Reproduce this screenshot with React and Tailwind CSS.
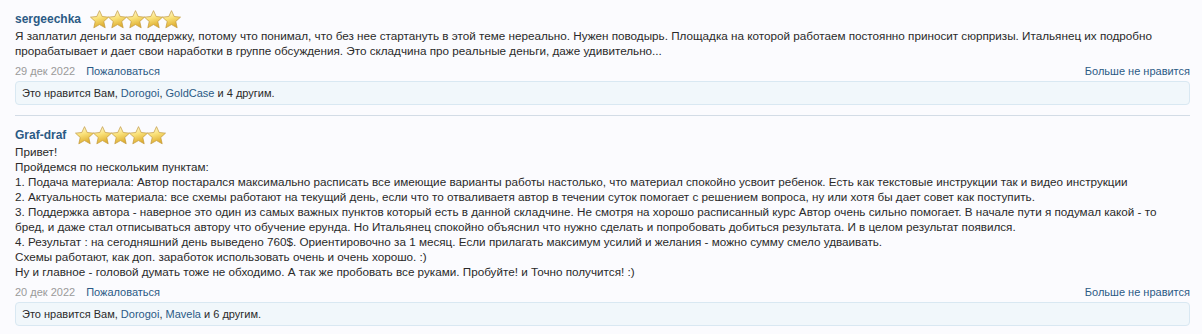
import React from 'react';

const Star = ({ id }) => (
  <svg width="19" height="19" viewBox="0 0 24 24" className="-mr-px">
    <defs>
      <linearGradient id={id} x1="0.2" y1="0" x2="0.5" y2="1">
        <stop offset="0" stopColor="#fffbe6" />
        <stop offset="0.45" stopColor="#fae27a" />
        <stop offset="1" stopColor="#dca92a" />
      </linearGradient>
    </defs>
    <path
      d="M12 .8l3.4 7.4 8 .8-6 5.5 1.8 8L12 18.4l-7.2 4.1 1.8-8-6-5.5 8-.8z"
      fill={`url(#${id})`}
      stroke="#c39a3c"
      strokeWidth="0.9"
      strokeLinejoin="round"
    />
  </svg>
);

const Stars = ({ pre }) => (
  <div className="flex items-center">
    {[0, 1, 2, 3, 4].map((i) => (
      <Star key={i} id={`${pre}-${i}`} />
    ))}
  </div>
);

const Review = ({ name, pre, lines, date, likes, last }) => (
  <div className={`pt-[10px] ${last ? '' : 'border-b border-[#d3dce6] pb-[10px]'}`}>
    <div className="flex items-center gap-[9px] h-[18px]">
      <span className="font-bold text-[12px] text-[#2b5a85]">{name}</span>
      <Stars pre={pre} />
    </div>
    <div className="text-[11.7px] leading-[15px] text-[#2a2a2a]">
      {lines.map((l, i) => (
        <div key={i} className="whitespace-nowrap">{l}</div>
      ))}
    </div>
    <div className="flex justify-between items-center text-[11px] mt-[6px] h-[14px]">
      <div className="flex gap-[11px]">
        <span className="text-[#9a9a9a]">{date}</span>
        <span className="text-[#2b5a85]">Пожаловаться</span>
      </div>
      <span className="text-[#2b5a85]">Больше не нравится</span>
    </div>
    <div className="mt-[3px] h-[24px] border border-[#d9e8f2] bg-[#f1f7fb] rounded-[4px] flex items-center px-[6px] text-[11px] text-[#2a2a2a]">
      <span>
        Это нравится Вам, <span className="text-[#2b5a85]">Dorogoi</span>,{' '}
        <span className="text-[#2b5a85]">{likes[0]}</span> и {likes[1]} другим.
      </span>
    </div>
  </div>
);

export default function App() {
  return (
    <div
      className="w-[1202px] h-[334px] bg-[#fbfbfe] pl-[15px] pr-[12px] overflow-hidden"
      style={{ fontFamily: '"Liberation Sans", Arial, sans-serif' }}
    >
      <Review
        name="sergeechka"
        pre="a"
        date="29 дек 2022"
        likes={['GoldCase', '4']}
        lines={[
          'Я заплатил деньги за поддержку, потому что понимал, что без нее стартануть в этой теме нереально. Нужен поводырь. Площадка на которой работаем постоянно приносит сюрпризы. Итальянец их подробно',
          'прорабатывает и дает свои наработки в группе обсуждения. Это складчина про реальные деньги, даже удивительно...',
        ]}
      />
      <Review
        name="Graf-draf"
        pre="b"
        last
        date="20 дек 2022"
        likes={['Mavela', '6']}
        lines={[
          'Привет!',
          'Пройдемся по нескольким пунктам:',
          '1. Подача материала: Автор постарался максимально расписать все имеющие варианты работы настолько, что материал спокойно усвоит ребенок. Есть как текстовые инструкции так и видео инструкции',
          '2. Актуальность материала: все схемы работают на текущий день, если что то отваливаетя автор в течении суток помогает с решением вопроса, ну или хотя бы дает совет как поступить.',
          '3. Поддержка автора - наверное это один из самых важных пунктов который есть в данной складчине. Не смотря на хорошо расписанный курс Автор очень сильно помогает. В начале пути я подумал какой - то',
          'бред, и даже стал отписываться автору что обучение ерунда. Но Итальянец спокойно объяснил что нужно сделать и попробовать добиться результата. И в целом результат появился.',
          '4. Результат : на сегодняшний день выведено 760$. Ориентировочно за 1 месяц. Если прилагать максимум усилий и желания - можно сумму смело удваивать.',
          'Схемы работают, как доп. заработок использовать очень и очень хорошо. :)',
          'Ну и главное - головой думать тоже не обходимо. А так же пробовать все руками. Пробуйте! и Точно получится! :)',
        ]}
      />
    </div>
  );
}
